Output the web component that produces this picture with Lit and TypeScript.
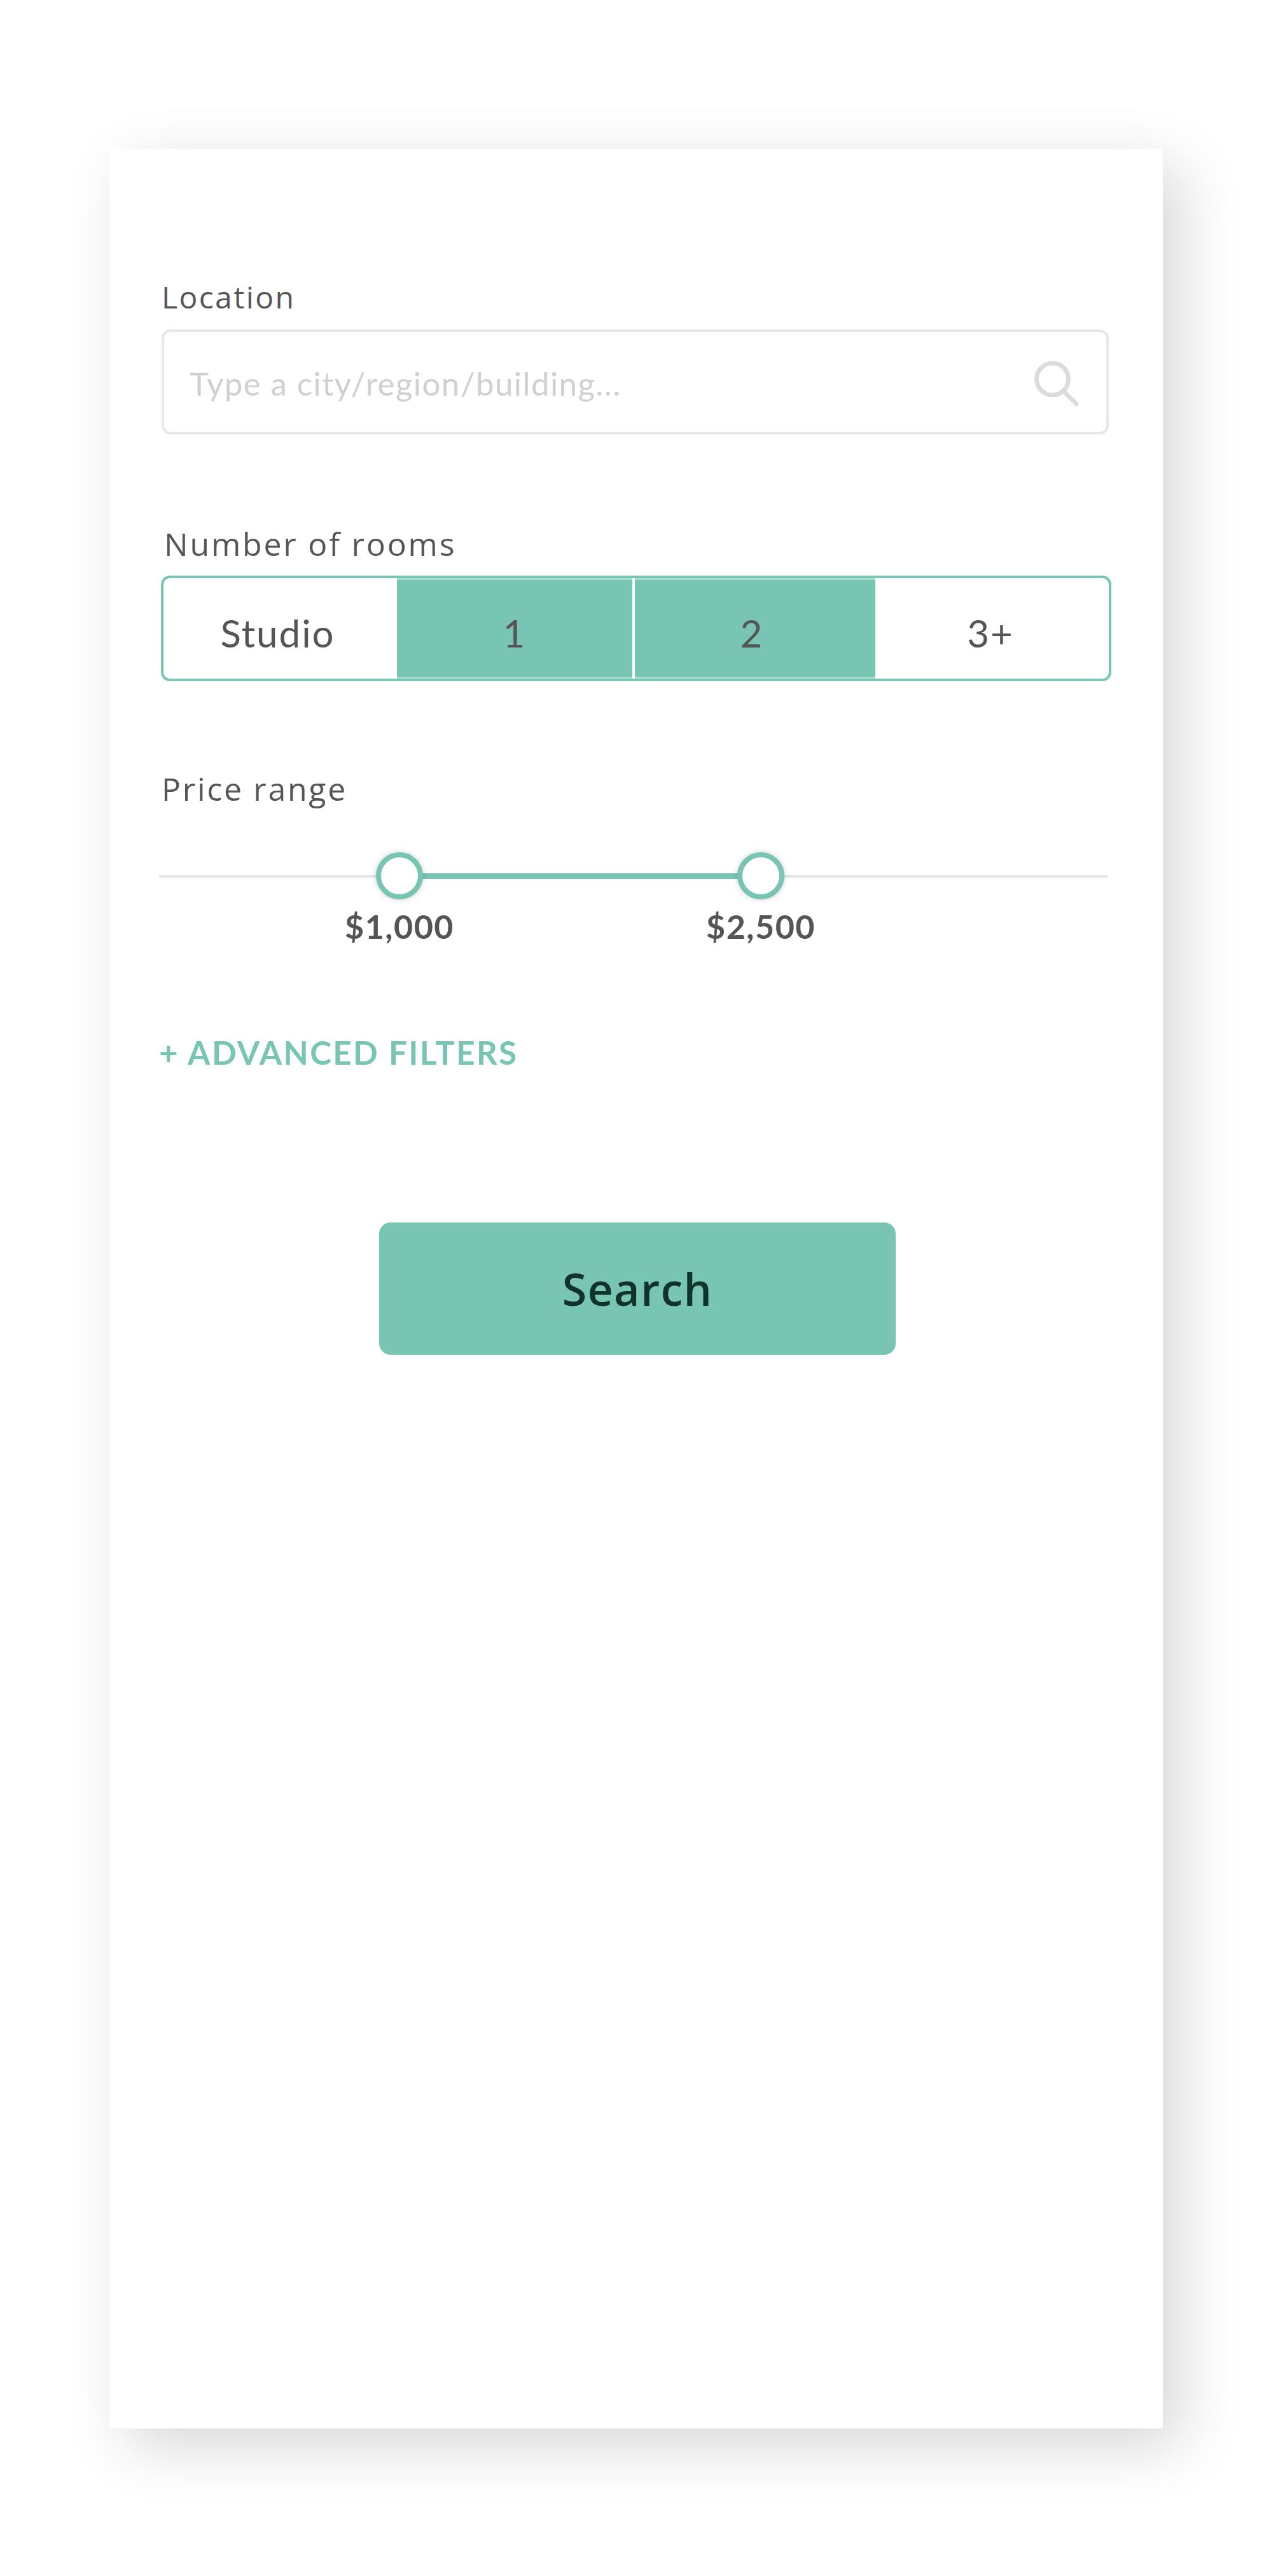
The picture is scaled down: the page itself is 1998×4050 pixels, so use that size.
import { LitElement, html, css } from 'lit';
import { customElement } from 'lit/decorators.js';

const ROOMS = [
  { label: 'Studio', on: false, w: 367, nudge: 8 },
  { label: '1', on: true, w: 374, nudge: 0 },
  { label: '2', on: true, w: 378, nudge: 10 },
  { label: '3+', on: false, w: 0, nudge: 5 },
];

@customElement('app-root')
export class AppRoot extends LitElement {
  static styles = css`
    :host {
      display: block;
      width: 1998px;
      height: 4050px;
      background: #fff;
      padding: 234px 170px 232px 172px;
      box-sizing: border-box;
      font-family: Lato, sans-serif;
      color: #555;
    }

    .card {
      height: 100%;
      background: #fff;
      box-shadow: 28px 28px 90px rgba(0, 0, 0, 0.16);
      padding: 204px 84px 0 82px;
      box-sizing: border-box;
    }

    .label {
      font-family: 'Open Sans', sans-serif;
      font-size: 48px;
      font-weight: 400;
      line-height: 58px;
      letter-spacing: 2.4px;
    }

    .input {
      height: 165px;
      width: 1489px;
      margin-top: 22px;
      border: 4px solid #e8e8e8;
      border-radius: 14px;
      box-sizing: border-box;
      display: flex;
      align-items: center;
      justify-content: space-between;
      padding: 0 41px 0 40px;
    }

    .input svg {
      margin-top: 6px;
    }

    .placeholder {
      margin-top: 4px;
      font-size: 51px;
      font-weight: 400;
      color: #d0d0d0;
      letter-spacing: 1.4px;
    }

    .rooms-label {
      margin: 143px 0 0 4px;
      font-size: 50px;
      letter-spacing: 2.8px;
    }

    .seg {
      display: flex;
      width: 1494px;
      height: 166px;
      margin: 21px 0 0 -1px;
      border: 4px solid #78c5b4;
      border-radius: 14px;
      box-sizing: border-box;
      overflow: hidden;
    }

    .seg div {
      display: flex;
      align-items: center;
      justify-content: center;
      padding-top: 14px;
      font-size: 60px;
      letter-spacing: 2px;
      box-sizing: border-box;
    }

    .seg .on {
      background: #78c5b4;
      border-right: 4px solid #fff;
      box-shadow: inset 0 3px 0 #a9dccf, inset 0 -3px 0 #a9dccf;
    }

    .seg .on.last {
      border-right: 0;
    }

    .seg .fill {
      flex: 1;
    }

    .price-label {
      margin-top: 140px;
      font-size: 50px;
      letter-spacing: 2.7px;
    }

    .slider {
      position: relative;
      height: 160px;
      margin-top: 71px;
    }

    .track {
      position: absolute;
      left: -4px;
      width: 1491px;
      top: 36px;
      height: 4px;
      background: #e8e8e8;
    }

    .range {
      position: absolute;
      left: 374px;
      width: 568px;
      top: 33px;
      height: 9px;
      background: #78c5b4;
    }

    .thumb {
      position: absolute;
      top: 0;
      width: 74px;
      height: 74px;
      margin-left: -37px;
      border: 8px solid #78c5b4;
      border-radius: 50%;
      background: #fff;
      box-sizing: border-box;
      box-shadow: 0 0 8px rgba(0, 0, 0, 0.2);
    }

    .price {
      position: absolute;
      top: 85px;
      transform: translateX(-50%);
      font-size: 52px;
      font-weight: 700;
      line-height: 62px;
      letter-spacing: 1.5px;
      white-space: nowrap;
    }

    .advanced {
      margin: 124px 0 0 -4px;
      font-size: 51px;
      font-weight: 700;
      line-height: 62px;
      letter-spacing: 2.4px;
      color: #78c5b4;
    }

    .button {
      width: 812px;
      height: 208px;
      margin: 236px 0 0 342px;
      background: #78c5b4;
      border-radius: 18px;
      display: flex;
      align-items: center;
      justify-content: center;
      font-family: 'Open Sans', sans-serif;
      font-weight: 600;
      font-size: 70px;
      letter-spacing: 1.3px;
      color: #12332c;
    }
  `;

  render() {
    return html`
      <div class="card">
        <div class="label">Location</div>
        <div class="input">
          <span class="placeholder">Type a city/region/building...</span>
          <svg width="72" height="74" viewBox="0 0 72 74" fill="none" stroke="#dcdcdc" stroke-width="7">
            <circle cx="28.5" cy="29" r="25"></circle>
            <path d="M47 49 L66 68" stroke-linecap="round"></path>
          </svg>
        </div>

        <div class="label rooms-label">Number of rooms</div>
        <div class="seg">
          ${ROOMS.map((r, i) => html`
            <div
              class="${r.on ? 'on' : ''} ${i === 2 ? 'last' : ''} ${r.w ? '' : 'fill'}"
              style="${r.w ? `width:${r.w}px;` : ''}padding-right:${r.nudge}px"
            >${r.label}</div>
          `)}
        </div>

        <div class="label price-label">Price range</div>
        <div class="slider">
          <div class="track"></div>
          <div class="range"></div>
          <div class="thumb" style="left:374px"></div>
          <div class="thumb" style="left:942px"></div>
          <div class="price" style="left:374px">$1,000</div>
          <div class="price" style="left:942px">$2,500</div>
        </div>

        <div class="advanced">+ ADVANCED FILTERS</div>
        <div class="button">Search</div>
      </div>
    `;
  }
}
